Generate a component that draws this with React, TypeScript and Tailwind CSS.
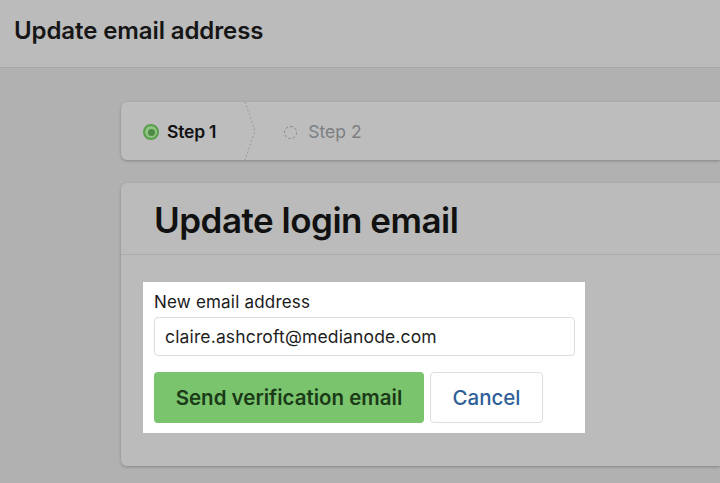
export default function App() {
  return (
    <div className="h-[483px] w-[720px] overflow-hidden bg-[#b1b1b1] font-['Inter',sans-serif]">
      {/* Page header */}
      <div className="flex h-[68px] items-start border-b border-[#a6a6a6] bg-[#bbbbbb] px-[14px] pt-[13px]">
        <h1 className="text-[24px] font-semibold tracking-[-0.1px] text-[#161616]">Update email address</h1>
      </div>

      <div className="pl-[121px] pt-[34px]">
        {/* Steps */}
        <div className="flex h-[58px] items-center rounded-l-md bg-[#bdbdbd] shadow-[0_1px_3px_rgba(0,0,0,0.25)]">
          <div className="flex items-center gap-[8px] pl-[22px] pr-[27px] pt-[2px]">
            <span className="flex h-[16px] w-[16px] items-center justify-center rounded-full border-2 border-[#5a9e4e] bg-[#8fc482]">
              <span className="h-[7px] w-[7px] rounded-full bg-[#4f8a45]" />
            </span>
            <span className="text-[17.5px] font-semibold tracking-[-0.2px] text-[#111]">Step 1</span>
          </div>
          <svg width="14" height="58" viewBox="0 0 14 58" className="shrink-0">
            <path d="M2 0 L12 29 L2 58" fill="none" stroke="#9a9a9a" strokeWidth="1" strokeDasharray="2 2" />
          </svg>
          <div className="flex items-center gap-[11px] pl-[27px] pt-[2px]">
            <span className="h-[13px] w-[13px] rounded-full border border-dashed border-[#8a8a8a]" />
            <span className="text-[17.5px] text-[#7c7f83]">Step 2</span>
          </div>
        </div>

        {/* Card */}
        <div className="mt-[23px] h-[283px] rounded-l-md bg-[#bbbbbb] shadow-[0_1px_3px_rgba(0,0,0,0.25)]">
          <div className="flex h-[72px] items-center border-b border-[#acacac] pl-[33px]">
            <h2 className="mt-[3px] text-[35px] font-semibold tracking-[-0.5px] text-[#111]">Update login email</h2>
          </div>
          <div className="pl-[22px] pt-[27px]">
            <div className="w-[442px] bg-white px-[11px] pb-[10px] pt-[8px]">
              <label className="block text-[17px] tracking-[0.2px] text-[#1a1a1a]">New email address</label>
              <div className="mt-[1px] flex h-[39px] w-[421px] items-center rounded border border-[#dcdcdc] px-[10px] pt-[2px] text-[17.5px] tracking-[0.15px] text-[#1e1e1e]">
                claire.ashcroft@medianode.com
              </div>
              <div className="mt-[16px] flex gap-[6px]">
                <button className="h-[51px] w-[270px] rounded bg-[#79c46d] pt-[2px] text-[20.5px] font-semibold text-[#1b3a18]">
                  Send verification email
                </button>
                <button className="h-[51px] w-[113px] rounded border border-[#dedede] bg-white pt-[2px] text-[20.5px] font-medium text-[#2f5f99]">
                  Cancel
                </button>
              </div>
            </div>
          </div>
        </div>
      </div>
    </div>
  );
}
